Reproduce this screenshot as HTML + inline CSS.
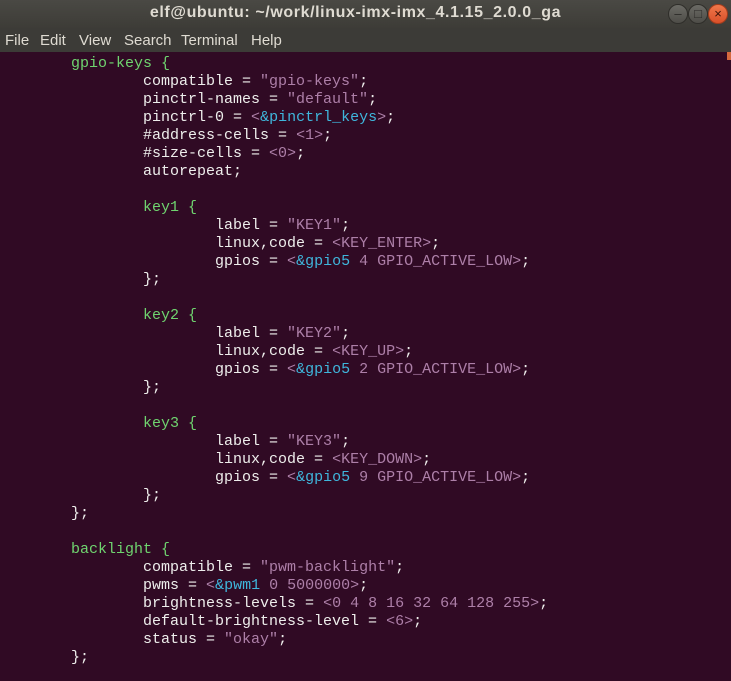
<!DOCTYPE html>
<html><head><meta charset="utf-8"><style>
body{margin:0;width:731px;height:681px;overflow:hidden;background:#300a24;font-family:"Liberation Sans",sans-serif;position:relative}
#title{position:absolute;left:0;top:0;width:731px;height:28px;background:linear-gradient(#4a4944,#3d3c37);color:#dfdbd2;font-weight:bold;font-size:16px;letter-spacing:0.6px;text-align:center;line-height:26px;text-indent:-20px}
#menu{position:absolute;left:0;top:28px;width:731px;height:24px;background:#3c3b37;color:#dfdbd2;font-size:15px;line-height:25px}
#menu span{position:absolute;top:0}
.btn{position:absolute;top:4px;width:20px;height:20px;border-radius:50%;background:linear-gradient(#6b6a65,#4e4d48);border:1px solid #2f2e2a;box-sizing:border-box;color:#2b2a27;font-size:13px;text-align:center;line-height:18px}
pre{position:absolute;left:-1px;top:55px;margin:0;font-family:"Liberation Mono",monospace;font-size:15px;line-height:18px;color:#eeeeec}
.g{color:#6fd46f}.p{color:#ad7fa8}.c{color:#3fb6dc}
#sb{position:absolute;right:0;top:52px;width:4px;height:629px;background:#300a24}
#sb div{width:4px;height:8px;background:#d5683e}
</style></head><body>
<div id="title">elf@ubuntu: ~/work/linux-imx-imx_4.1.15_2.0.0_ga</div>
<div class="btn" style="left:668px">–</div>
<div class="btn" style="left:688px">□</div>
<div class="btn" style="left:708px;background:linear-gradient(#f0774a,#d9502a);border-color:#a33c1c;color:#3a1208">×</div>
<div id="menu"><span style="left:5px">File</span><span style="left:40px">Edit</span><span style="left:79px">View</span><span style="left:124px">Search</span><span style="left:181px">Terminal</span><span style="left:251px">Help</span></div>
<div id="sb"><div></div></div>
<pre>        <span class="g">gpio-keys {</span>
                compatible = <span class="p">"gpio-keys"</span>;
                pinctrl-names = <span class="p">"default"</span>;
                pinctrl-0 = <span class="p">&lt;</span><span class="c">&amp;pinctrl_keys</span><span class="p">&gt;</span>;
                #address-cells = <span class="p">&lt;1&gt;</span>;
                #size-cells = <span class="p">&lt;0&gt;</span>;
                autorepeat;

                <span class="g">key1 {</span>
                        label = <span class="p">"KEY1"</span>;
                        linux,code = <span class="p">&lt;KEY_ENTER&gt;</span>;
                        gpios = <span class="p">&lt;</span><span class="c">&amp;gpio5</span><span class="p"> 4 GPIO_ACTIVE_LOW&gt;</span>;
                };

                <span class="g">key2 {</span>
                        label = <span class="p">"KEY2"</span>;
                        linux,code = <span class="p">&lt;KEY_UP&gt;</span>;
                        gpios = <span class="p">&lt;</span><span class="c">&amp;gpio5</span><span class="p"> 2 GPIO_ACTIVE_LOW&gt;</span>;
                };

                <span class="g">key3 {</span>
                        label = <span class="p">"KEY3"</span>;
                        linux,code = <span class="p">&lt;KEY_DOWN&gt;</span>;
                        gpios = <span class="p">&lt;</span><span class="c">&amp;gpio5</span><span class="p"> 9 GPIO_ACTIVE_LOW&gt;</span>;
                };
        };

        <span class="g">backlight {</span>
                compatible = <span class="p">"pwm-backlight"</span>;
                pwms = <span class="p">&lt;</span><span class="c">&amp;pwm1</span><span class="p"> 0 5000000&gt;</span>;
                brightness-levels = <span class="p">&lt;0 4 8 16 32 64 128 255&gt;</span>;
                default-brightness-level = <span class="p">&lt;6&gt;</span>;
                status = <span class="p">"okay"</span>;
        };
</pre>
</body></html>
